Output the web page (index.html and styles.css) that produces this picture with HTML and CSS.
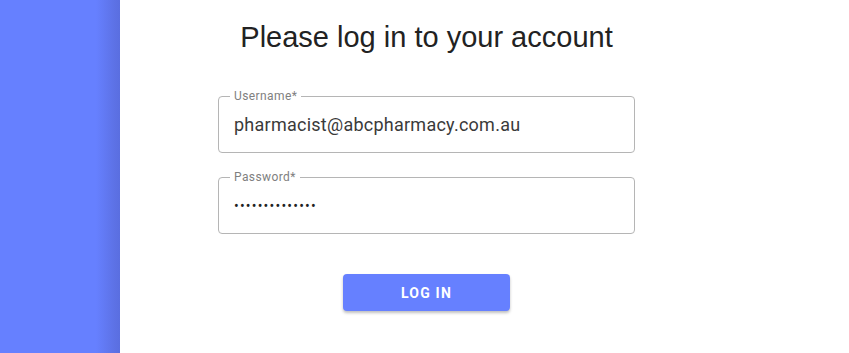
FILE: index.html
```html
<!DOCTYPE html>
<html lang="en">
<head>
<meta charset="utf-8">
<title>Login</title>
<link rel="stylesheet" href="styles.css">
</head>
<body>
<div class="page">
  <aside class="side"></aside>
  <main class="main">
    <div class="column">
      <h1 class="title">Please log in to your account</h1>
      <div class="field">
        <span class="label">Username*</span>
        <div class="value">pharmacist@abcpharmacy.com.au</div>
      </div>
      <div class="field field-pw">
        <span class="label">Password*</span>
        <div class="value dots">••••••••••••••</div>
      </div>
      <button class="btn">LOG IN</button>
    </div>
  </main>
</div>
</body>
</html>
```

FILE: styles.css
```css
html, body {
  margin: 0;
  padding: 0;
  background: #ffffff;
}
.page {
  display: flex;
  width: 849px;
  height: 353px;
  overflow: hidden;
}
.side {
  width: 120px;
  flex: none;
  background: linear-gradient(to right, #6680ff 0, #6680ff 96px, #5d72e6 114px, #5a6ee0 120px);
}
.main {
  flex: 1;
  padding-left: 98px;
}
.column {
  width: 417px;
  display: flex;
  flex-direction: column;
  align-items: center;
}
.title {
  margin: 20px 0 0 0;
  font-family: "Liberation Sans", Arial, sans-serif;
  font-weight: 400;
  font-size: 29px;
  line-height: 34px;
  color: #222222;
}
.field {
  position: relative;
  box-sizing: border-box;
  width: 417px;
  height: 57px;
  margin-top: 42px;
  border: 1px solid #b5b5b5;
  border-radius: 4px;
  display: flex;
  align-items: center;
  padding-left: 15px;
}
.field-pw {
  margin-top: 24px;
}
.label {
  position: absolute;
  top: -8px;
  left: 11px;
  padding: 0 4px;
  background: #ffffff;
  font-family: Roboto, sans-serif;
  font-size: 12px;
  line-height: 14px;
  color: #808080;
  letter-spacing: 0.4px;
}
.value {
  font-family: Roboto, sans-serif;
  font-size: 18px;
  color: #3a3a3a;
  letter-spacing: 0.25px;
}
.dots {
  font-size: 14px;
  letter-spacing: 1.2px;
  color: #222222;
}
.btn {
  margin-top: 40px;
  width: 167px;
  height: 37px;
  border: none;
  border-radius: 4px;
  background: #6680ff;
  color: #ffffff;
  font-family: Roboto, sans-serif;
  font-weight: 700;
  font-size: 14px;
  letter-spacing: 1.2px;
  box-shadow: 0 2px 3px rgba(0,0,0,0.25);
}
```
